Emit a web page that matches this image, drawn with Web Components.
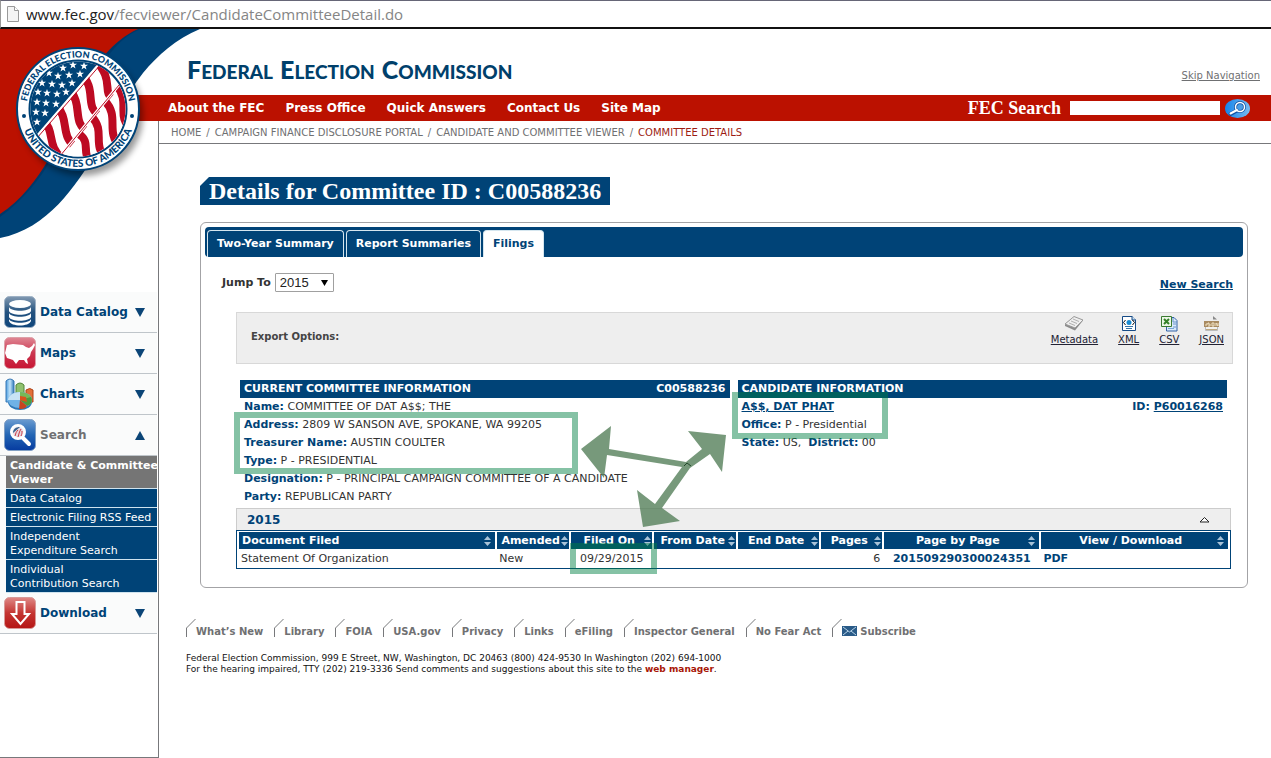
<!DOCTYPE html>
<html lang="en">
<head>
<meta charset="utf-8">
<meta name="viewport" content="width=device-width, initial-scale=1">
<title>Committee Details - Federal Election Commission</title>
<style>
    :root {
        --navy: #004377;
        --red: #bb1100;
        --gray: #6f7072;
        --line: #77787b;
        --serif: "Liberation Serif", Georgia, serif;
    }
    body {
        margin: 0;
        min-height: 100vh;
        display: flex;
        flex-direction: column;
        background: #fff;
        color: #333;
        font: 11px/18px "DejaVu Sans", Verdana, sans-serif;
    }
</style>
</head>
<body>

<address-bar host="www.fec.gov" path="/fecviewer/CandidateCommitteeDetail.do"></address-bar>

<site-header>
    <nav-link>About the FEC</nav-link>
    <nav-link>Press Office</nav-link>
    <nav-link>Quick Answers</nav-link>
    <nav-link>Contact Us</nav-link>
    <nav-link>Site Map</nav-link>
</site-header>

<page-body>
    <side-menu slot="side">
        <menu-entry label="Data Catalog" icon="database"></menu-entry>
        <menu-entry label="Maps" icon="map"></menu-entry>
        <menu-entry label="Charts" icon="chart"></menu-entry>
        <menu-entry label="Search" icon="search" open>
            <sub-entry current>Candidate &amp; Committee Viewer</sub-entry>
            <sub-entry>Data Catalog</sub-entry>
            <sub-entry>Electronic Filing RSS Feed</sub-entry>
            <sub-entry>Independent<br>Expenditure Search</sub-entry>
            <sub-entry>Individual<br>Contribution Search</sub-entry>
        </menu-entry>
        <menu-entry label="Download" icon="download"></menu-entry>
    </side-menu>

    <bread-crumbs></bread-crumbs>

    <committee-panel heading="Details for Committee ID : C00588236">
        <tab-strip slot="tabs"></tab-strip>
        <export-bar></export-bar>
        <committee-info></committee-info>
        <filings-table></filings-table>
        <callout-layer></callout-layer>
    </committee-panel>

    <site-footer></site-footer>
</page-body>

<template id="address-bar">
    <style>
        :host {
            display: flex;
            align-items: center;
            gap: 7px;
            height: 26px;
            padding-left: 6px;
            border-top: 1px solid #667;
            border-bottom: 2px solid #111;
            border-left: 1px solid #999;
            font: 15px/26px "Open Sans", sans-serif;
            color: #858585;
        }
        b { font-weight: 400; color: #222; }
        svg { flex: none; }
    </style>
    <svg width="12" height="16" viewBox="0 0 12 16"><path d="M.5 .5h7l4 4v11H.5z" fill="#f4f4f4" stroke="#999"/><path d="M7.500 .5v4h4" fill="#fff" stroke="#999"/></svg>
    <span><b></b><span class="path"></span></span>
</template>

<template id="site-header">
    <style>
        :host { display: block; position: relative; z-index: 1; }
        .top {
            display: flex;
            align-items: flex-end;
            justify-content: space-between;
            height: 66px;
            box-sizing: border-box;
            padding: 0 11px 12px 187px;
        }
        h1 {
            margin: 0;
            display: flex;
            gap: 7px;
            font: 900 19px/22px Lato, sans-serif;
            text-transform: uppercase;
            color: #00406b;
        }
        h1 span { display: block; }
        h1 span::first-letter { font-size: 25px; }
        .skip { font-size: 10px; line-height: 15px; color: var(--gray); }
        .bar {
            display: flex;
            align-items: center;
            gap: 21px;
            height: 26px;
            padding: 0 21px 0 168px;
            background: var(--red);
        }
        form { display: flex; align-items: center; gap: 5px; margin-left: auto; }
        label { font: bold 18px/26px var(--serif); color: #fff; margin-right: 4px; }
        input {
            width: 150px;
            height: 14px;
            box-sizing: border-box;
            padding: 0 2px;
            border: 0;
            background: #fff;
        }
        button { display: flex; padding: 0; border: 0; background: none; }
        .seal { position: absolute; left: 0; top: 0; }
        .ring { font: 900 9px Lato, sans-serif; fill: var(--navy); }
        .ring.low { font-size: 10px; }
    </style>
    <div class="top">
        <h1><span>Federal</span> <span>Election</span> <span>Commission</span></h1>
        <a class="skip" href="#main">Skip Navigation</a>
    </div>
    <div class="bar">
        <slot></slot>
        <form>
            <label for="q">FEC Search</label>
            <input id="q" type="text">
            <button type="button" aria-label="Search">
                <svg width="25" height="19" viewBox="0 0 25 19"><defs><linearGradient id="bt"><stop offset="0" stop-color="#1483ea"/><stop offset="1" stop-color="#79bbef"/></linearGradient></defs><ellipse cx="12.500" cy="9.500" rx="12.500" ry="9.500" fill="url(#bt)"/><path d="M12 11.500L5.500 15" stroke="#1250a0" stroke-width="4" stroke-linecap="round"/><circle cx="15" cy="8" r="4.500" fill="#4a9ee6" stroke="#1250a0" stroke-width="3"/><path d="M12 11L5.500 14.500" stroke="#fff" stroke-width="2" stroke-linecap="round"/><circle cx="15" cy="8" r="4.500" fill="none" stroke="#fff" stroke-width="1.500"/></svg>
            </button>
        </form>
    </div>
    <svg class="seal" width="204" height="214" viewBox="0 0 204 214">
        <defs>
            <clipPath id="disc"><circle cx="78" cy="80" r="47.500"/></clipPath>
            <filter id="shade" x="-20%" y="-20%" width="150%" height="150%"><feGaussianBlur stdDeviation="3"/></filter>
            <path id="upper" d="M26.500 80a51.500 51.500 0 0 1 103 0"/>
            <path id="lower" d="M20 80a58 58 0 0 0 116 0"/>
            <path id="star" d="M0-4L1-1.200H4L1.600.6 2.500 3.500 0 1.700-2.500 3.500-1.600.6-4-1.200H-1z" fill="#fff"/>
        </defs>
        <path d="M0 0H200C176 10 158 26 143 44C125 66 112 98 96 124C76 156 48 200 0 209z" fill="#004377"/>
        <path d="M141 0C118 8 100 36 84 66C64 104 48 154 0 188V178C44 146 62 96 82 58C96 30 112 8 133 0z" fill="#003260" opacity=".6"/>
        <path d="M0 0H138C112 12 96 34 80 66C62 104 42 158 0 185z" fill="#bb1100"/>
        <circle cx="82" cy="86" r="61" fill="#000" opacity=".4" filter="url(#shade)"/>
        <circle cx="78" cy="80" r="61" fill="#fff" stroke="#004377" stroke-width="2"/>
        <circle cx="78" cy="80" r="48.500" fill="#fff" stroke="#004377" stroke-width="2"/>
        <g clip-path="url(#disc)">
            <g fill="none" stroke="#bd0a22" stroke-width="8">
                <path d="M42 90C56 102 46 116 62 129"/>
                <path d="M55 74C71 92 59 104 75 118"/>
                <path d="M68 58C85 78 70 92 89 104"/>
                <path d="M80 43C99 62 82 78 102 88"/>
                <path d="M93 28C117 54 100 60 114 72"/>
            </g>
            <path d="M128 48L62 128V134H132z" fill="#fff"/>
            <g fill="none" stroke="#bd0a22" stroke-width="8">
                <path d="M117 57C131 74 115 87 132 101"/>
                <path d="M105 72C120 88 105 102 120 118"/>
                <path d="M92 88C106 103 91 116 107 130"/>
                <path d="M79 105C92 114 80 124 92 134"/>
            </g>
            <path d="M128 45L60 127" stroke="#fff" stroke-width="3"/>
            <path d="M124 50L60 127" stroke="#bd0a22"/>
            <path d="M20 20H108L97 36L36 107L20 120z" fill="#004377"/>
            <path d="M99 35L36 108" stroke="#fff" stroke-width="2"/>
            <path d="M101 35L37 109" stroke="#bd0a22"/>
            <g>
                <use href="#star" x="63" y="39"/><use href="#star" x="73" y="36"/><use href="#star" x="84" y="37"/>
                <use href="#star" x="49" y="44"/><use href="#star" x="58" y="47"/><use href="#star" x="69" y="46"/><use href="#star" x="80" y="45"/>
                <use href="#star" x="42" y="54"/><use href="#star" x="52" y="55"/><use href="#star" x="62" y="56"/><use href="#star" x="72" y="54"/>
                <use href="#star" x="38" y="63"/><use href="#star" x="47" y="64"/><use href="#star" x="57" y="65"/><use href="#star" x="66" y="63"/>
                <use href="#star" x="37" y="73"/><use href="#star" x="46" y="74"/><use href="#star" x="56" y="75"/>
                <use href="#star" x="36" y="83"/><use href="#star" x="45" y="84"/><use href="#star" x="37" y="93"/>
            </g>
        </g>
        <circle cx="24" cy="87" r="2" fill="#004377"/>
        <circle cx="132" cy="87" r="2" fill="#004377"/>
        <text class="ring" text-anchor="middle"><textPath href="#upper" startOffset="50%">FEDERAL ELECTION COMMISSION</textPath></text>
        <text class="ring low" text-anchor="middle"><textPath href="#lower" startOffset="50%">UNITED STATES OF AMERICA</textPath></text>
    </svg>
</template>

<template id="nav-link">
    <style>
        :host { display: block; }
        a { font-size: 12px; font-weight: bold; color: #fff; text-decoration: none; white-space: nowrap; }
    </style>
    <a href="#"><slot></slot></a>
</template>

<template id="page-body">
    <style>
        :host { flex: 1; display: grid; grid-template-columns: 159px minmax(0, 1fr); }
        aside {
            box-sizing: border-box;
            padding-top: 171px;
            border-right: 1px solid var(--line);
            border-bottom: 1px solid var(--line);
        }
    </style>
    <aside><slot name="side"></slot></aside>
    <main id="main"><slot></slot></main>
</template>

<template id="side-menu">
    <style>
        :host { display: block; margin-right: 1px; background: #fafbfb; }
    </style>
    <slot></slot>
</template>

<template id="menu-entry">
    <style>
        :host { display: block; }
        button {
            display: flex;
            align-items: center;
            gap: 4px;
            width: 100%;
            height: 41px;
            box-sizing: border-box;
            padding: 0 12px 0 4px;
            border: 0;
            border-bottom: 1px solid #bfc5ca;
            background: none;
            color: var(--navy);
            font: bold 12px/18px "DejaVu Sans", Verdana, sans-serif;
            text-align: left;
        }
        :host([open]) button { color: var(--gray); }
        .name { flex: 1; }
        .mark { color: #0b4577; }
        :host([open]) .mark { transform: scaleY(-1); }
        .sub { padding-left: 6px; }
    </style>
    <button type="button">
        <svg class="pic" width="32" height="32" viewBox="0 0 32 32"></svg>
        <span class="name"></span>
        <svg class="mark" width="10" height="9" viewBox="0 0 10 9"><path d="M0 0H10L5 9z" fill="currentColor"/></svg>
    </button>
    <div class="sub"><slot></slot></div>
</template>

<template id="sub-entry">
    <style>
        :host {
            display: block;
            padding: 3px 0 1px 4px;
            background: var(--navy);
            border-bottom: 1px solid #cfe3ee;
            line-height: 14px;
            overflow: hidden;
        }
        :host([current]) { background: #757575; font-weight: bold; }
        a { color: #fff; text-decoration: none; white-space: nowrap; }
        :host([current]) a { white-space: normal; display: block; margin-right: -4px; }
    </style>
    <a href="#"><slot></slot></a>
</template>

<template id="bread-crumbs">
    <style>
        :host {
            display: flex;
            flex-wrap: wrap;
            gap: 5px;
            padding: 2px 12px 1px;
            border-bottom: 1px solid var(--line);
            font-size: 10px;
            line-height: 19px;
            color: var(--gray);
            text-transform: uppercase;
        }
        a { color: inherit; text-decoration: none; }
        b { font-weight: 400; color: #9c1c12; }
    </style>
    <a href="#">Home</a><span>/</span>
    <a href="#">Campaign Finance Disclosure Portal</a><span>/</span>
    <a href="#">Candidate and Committee Viewer</a><span>/</span>
    <b>Committee Details</b>
</template>

<template id="committee-panel">
    <style>
        :host { display: block; padding: 33px 23px 0 41px; }
        h2 {
            width: fit-content;
            margin: 0 0 17px;
            padding: 0 9px;
            background: var(--navy);
            clip-path: polygon(9px 0, 100% 0, 100% 100%, 0 100%, 0 9px);
            color: #fff;
            font: bold 24px/28px var(--serif);
        }
        section {
            position: relative;
            padding: 4px 4px 18px;
            border: 1px solid #a3a3a6;
            border-radius: 6px;
        }
        .tools {
            display: flex;
            align-items: center;
            justify-content: space-between;
            padding: 14px 10px 18px 17px;
            font-weight: bold;
        }
        .jump { display: flex; align-items: center; gap: 4px; }
        .pick { position: relative; display: flex; }
        .pick svg { position: absolute; right: 6px; top: 7px; pointer-events: none; }
        select {
            appearance: none;
            width: 59px;
            height: 19px;
            padding: 0 4px;
            border: 1px solid #a0a0a0;
            border-radius: 1px;
            background: #fff;
            color: #222;
            font: 13px/17px "Liberation Sans", Arial, sans-serif;
        }
        .new { color: var(--navy); padding-top: 5px; }
        .inner { padding: 0 10px 0 31px; }
    </style>
    <h2></h2>
    <section>
        <slot name="tabs"></slot>
        <div class="tools">
            <div class="jump">
                <label for="year">Jump To</label>
                <span class="pick">
                    <select id="year"><option>2015</option></select>
                    <svg width="7" height="6" viewBox="0 0 7 6"><path d="M0 0H7L3.500 6z"/></svg>
                </span>
            </div>
            <a class="new" href="#">New Search</a>
        </div>
        <div class="inner"><slot></slot></div>
    </section>
</template>

<template id="tab-strip">
    <style>
        :host {
            display: flex;
            gap: 2px;
            padding: 3px 2px 0;
            border-radius: 4px;
            background: var(--navy);
        }
        button {
            height: 27px;
            padding: 0 9px;
            border: 1px solid #d5e6ef;
            border-bottom: 0;
            border-radius: 4px 4px 0 0;
            background: none;
            color: #fff;
            font: bold 11px/26px "DejaVu Sans", Verdana, sans-serif;
        }
        button[aria-selected="true"] { background: #fff; color: var(--navy); }
    </style>
    <button type="button" role="tab">Two-Year Summary</button>
    <button type="button" role="tab">Report Summaries</button>
    <button type="button" role="tab" aria-selected="true">Filings</button>
</template>

<template id="export-bar">
    <style>
        :host {
            display: flex;
            align-items: flex-start;
            justify-content: space-between;
            height: 52px;
            box-sizing: border-box;
            margin-bottom: 16px;
            padding: 2px 8px 0 14px;
            border: 1px solid #d8d8d8;
            background: #eee;
        }
        b { padding-top: 13px; color: #444; font-size: 10px; }
        div { display: flex; gap: 20px; }
        a {
            display: flex;
            flex-direction: column;
            align-items: center;
            gap: 1px;
            font-size: 10px;
            line-height: 13px;
            color: #223;
        }
    </style>
    <b>Export Options:</b>
    <div>
        <a href="#">
            <svg width="20" height="17" viewBox="0 0 20 17"><path d="M1 9L10 2L19 5.500L11 15.500L1 11z" fill="#8b8b8b"/><path d="M1 9L10 1.500L19 5L11 13z" fill="#efefef" stroke="#999"/><path d="M9 4l6 2.500M7 6l6 2.500M5 8l6 2.500" stroke="#b0b0b0"/></svg>
            Metadata
        </a>
        <a href="#">
            <svg width="16" height="17" viewBox="0 0 16 17"><path d="M1.500 1.500H11L14.500 5V15.500H1.500z" fill="#fff" stroke="#164b86"/><path d="M11 1L11 5H15" fill="#c6dced" stroke="#164b86"/><path d="M4.500 5L2.500 7.500L4.500 10M11.500 5L13.500 7.500L11.500 10" fill="none" stroke="#111"/><circle cx="8" cy="7.500" r="2.500" fill="#188ad0"/><path d="M4 11.500h8M5 13.500h6" stroke="#3774a6"/></svg>
            XML
        </a>
        <a href="#">
            <svg width="17" height="17" viewBox="0 0 17 17"><path d="M5.500 2.500H13L16 5.500V16H5.500z" fill="#d9e9fb" stroke="#3362a6"/><path d="M12 3v4h4M12 9h3M12 12h3" fill="none" stroke="#6d96cd"/><path d="M.5 1.500H10.500V11.500H.5z" fill="#edf7e8" stroke="#3a7b32"/><path d="M3 4L8 9M8 4L3 9" stroke="#348228" stroke-width="2"/><path d="M7 13.500h6" stroke="#79a6d8"/></svg>
            CSV
        </a>
        <a href="#">
            <svg width="17" height="17" viewBox="0 0 17 17"><path d="M2.500 6V15.500H14.500V6" fill="#f2f2f0" stroke="#bbb"/><path d="M10 1L14 4.500H10z" fill="#888"/><path d="M1 6h15v6H1z" fill="#a98b61"/><path d="M2 10h2V8m2 0H5v1h2v2H5m4-3h2v3H9zm4 3V8l2 3V8" fill="none" stroke="#f0e2c4"/><path d="M3 14.500h11" stroke="#bfa981"/></svg>
            JSON
        </a>
    </div>
</template>

<template id="committee-info">
    <style>
        :host {
            display: grid;
            grid-template-columns: 1fr 1fr;
            gap: 8px;
            padding: 0 6px 2px 4px;
        }
        h3 {
            display: flex;
            justify-content: space-between;
            margin: 0;
            padding: 0 4px;
            background: var(--navy);
            color: #fff;
            font-size: 11px;
            line-height: 18px;
        }
        p { margin: 0; padding: 0 4px; white-space: nowrap; }
        p.two { display: flex; justify-content: space-between; }
        b, a { color: var(--navy); font-weight: bold; }
    </style>
    <div>
        <h3><span>CURRENT COMMITTEE INFORMATION</span><span>C00588236</span></h3>
        <p><b>Name:</b> COMMITTEE OF DAT A$$; THE</p>
        <p><b>Address:</b> 2809 W SANSON AVE, SPOKANE, WA 99205</p>
        <p><b>Treasurer Name:</b> AUSTIN COULTER</p>
        <p><b>Type:</b> P - PRESIDENTIAL</p>
        <p><b>Designation:</b> P - PRINCIPAL CAMPAIGN COMMITTEE OF A CANDIDATE</p>
        <p><b>Party:</b> REPUBLICAN PARTY</p>
    </div>
    <div>
        <h3>CANDIDATE INFORMATION</h3>
        <p class="two"><a href="#">A$$, DAT PHAT</a><b>ID: <a href="#">P60016268</a></b></p>
        <p><b>Office:</b> P - Presidential</p>
        <p><b>State:</b> US,&nbsp; <b>District:</b> 00</p>
    </div>
</template>

<template id="filings-table">
    <style>
        :host { display: block; margin-right: 2px; }
        .year {
            display: flex;
            align-items: center;
            justify-content: space-between;
            height: 22px;
            box-sizing: border-box;
            padding: 0 20px 0 10px;
            border: 1px solid #ccc;
            border-bottom: 0;
            background: #eee;
            color: var(--navy);
            font-size: 12px;
            font-weight: bold;
        }
        table {
            width: 100%;
            table-layout: fixed;
            border: 1px solid var(--navy);
            border-spacing: 2px 1px;
            line-height: 17px;
        }
        th, td { padding: 0 2px; text-align: left; white-space: nowrap; }
        th { padding: 0 1px 0 3px; background: var(--navy); color: #fff; }
        th div { display: flex; align-items: center; }
        th span { flex: 1; text-align: center; }
        th.start span { text-align: left; }
        th.wide { padding-right: 4px; }
        td.mid { text-align: center; }
        td.num { text-align: right; }
        td a { color: var(--navy); font-weight: bold; text-decoration: none; }
    </style>
    <div class="year">2015 <svg width="11" height="7" viewBox="0 0 11 7"><path d="M1 6L5.500 1.500L10 6z" fill="#fff" stroke="#222"/></svg></div>
    <table>
        <colgroup></colgroup>
        <thead><tr></tr></thead>
        <tbody>
            <tr>
                <td>Statement Of Organization</td>
                <td>New</td>
                <td class="mid">09/29/2015</td>
                <td></td>
                <td></td>
                <td class="num">6</td>
                <td class="mid"><a href="#">201509290300024351</a></td>
                <td><a href="#">PDF</a></td>
            </tr>
        </tbody>
    </table>
</template>

<!-- Highlighter frames and the three-way arrow drawn over the panel -->
<template id="callout-layer">
    <style>
        :host { position: absolute; left: -1px; top: -1px; pointer-events: none; }
        svg { display: block; }
        rect { fill: none; stroke: rgba(0, 127, 66, .48); stroke-width: 6; }
        .arrow { fill: #557f5a; opacity: .8; }
    </style>
    <svg width="700" height="366" viewBox="200 222 700 366">
        <rect x="237" y="415" width="338" height="56"/>
        <rect x="735" y="395" width="150" height="41"/>
        <rect x="573" y="546" width="81" height="25"/>
        <path class="arrow" d="M581 449L611 426L609 449L686 462L702 449L688 431L726 435L722 472L710 454L690 468L662 508L680 521L643 527L637 490L655 504L682 467L607 455L604 478z"/>
        <path d="M684 466l3-3 4 3" fill="none" stroke="#25482c"/>
    </svg>
</template>

<template id="site-footer">
    <style>
        :host { display: block; padding: 30px 27px 0; color: #111; font-size: 9px; line-height: 11px; }
        nav { display: flex; flex-wrap: wrap; gap: 11px; margin-bottom: 15px; }
        a.item {
            display: flex;
            align-items: flex-end;
            color: var(--gray);
            font-size: 10px;
            font-weight: bold;
            line-height: 12px;
            text-decoration: none;
        }
        .mail { margin: 0 3px 2px 0; }
        p { margin: 0; }
        p a { color: #a81606; font-weight: bold; text-decoration: none; }
    </style>
    <nav></nav>
    <p>Federal Election Commission, 999 E Street, NW, Washington, DC 20463 (800) 424-9530 In Washington (202) 694-1000</p>
    <p>For the hearing impaired, TTY (202) 219-3336 Send comments and suggestions about this site to the <a href="#">web manager</a>.</p>
</template>

<script>
const ICONS = {
    database: `
        <defs><linearGradient id="g" x2="0" y2="1"><stop offset="0" stop-color="#8199b1"/><stop offset=".5" stop-color="#23527f"/><stop offset="1" stop-color="#0e457b"/></linearGradient></defs>
        <rect x=".5" y=".5" width="31" height="31" rx="5" fill="url(#g)" stroke="#9cb0c4"/>
        <g fill="#fff"><ellipse cx="16" cy="8" rx="11" ry="4"/>
        <path d="M5 11c2 5 20 5 22 0v4c-2 5-20 5-22 0zM5 17c2 5 20 5 22 0v4c-2 5-20 5-22 0zM5 23c2 5 20 5 22 0v2c-2 6-20 6-22 0z"/></g>`,
    map: `
        <defs><linearGradient id="g" x2="0" y2="1"><stop offset="0" stop-color="#df8794"/><stop offset=".5" stop-color="#cb3750"/><stop offset="1" stop-color="#c81533"/></linearGradient></defs>
        <rect x=".5" y=".5" width="31" height="31" rx="5" fill="url(#g)" stroke="#dda0a8"/>
        <path d="M3 8l6-1 10 1 3 2 3 1 3-2 2-3 1 2-2 4-2 3-1 4-3 3 1 5-2-1-2-3-5 0-3 4-3-4-3-1-3-1-2-5z" fill="#fff"/>`,
    chart: `
        <defs><linearGradient id="g"><stop offset="0" stop-color="#4d9ee0"/><stop offset=".5" stop-color="#c2e3f8"/><stop offset="1" stop-color="#3179ba"/></linearGradient></defs>
        <path d="M2 3q4-4 8 0V24H2z" fill="url(#g)" stroke="#3979b5"/>
        <path d="M12 7q4-4 8 0V20H12z" fill="#8fc16e" stroke="#518638"/>
        <path d="M22 12q4-3 7 0V24H22z" fill="#e26f37" stroke="#ae4319"/>
        <ellipse cx="16" cy="24" rx="12" ry="8" fill="#2d78b8"/>
        <ellipse cx="16" cy="22" rx="12" ry="8" fill="#6fb2e6"/>
        <path d="M16 22V14c-7 0-12 4-12 8z" fill="#c8e3f5"/>
        <path d="M16 22V14c7 0 12 4 12 8l-3 5z" fill="#77b957"/>
        <path d="M16 22l11-3c2 4 0 8-4 9z" fill="#4f9a3c"/>
        <path d="M16 22l7 6c-2 3-5 3-8 3z" fill="#c8431f"/>
        <path d="M16 22V18l6 1 1 5z" fill="#d9541e"/>`,
    search: `
        <defs><linearGradient id="g" x2="0" y2="1"><stop offset="0" stop-color="#6a9bd0"/><stop offset=".5" stop-color="#2265b4"/><stop offset="1" stop-color="#063ba0"/></linearGradient></defs>
        <rect x=".5" y=".5" width="31" height="31" rx="5" fill="url(#g)" stroke="#809fc4"/>
        <path d="M19 19l6 6" stroke="#fff" stroke-width="4" stroke-linecap="round"/>
        <circle cx="14" cy="13" r="7" fill="#f4f7fa" stroke="#fff" stroke-width="2"/>
        <circle cx="14" cy="13" r="5" fill="#e9d8de"/>
        <path d="M9 14c0-4 3-6 7-6z" fill="#34618f"/>
        <path d="M11 17c1-3 1-4 3-6M14 18c1-3 1-5 3-8M17 17c1-2 1-3 1-5" stroke="#c73843" fill="none"/>`,
    download: `
        <defs><linearGradient id="g" x2="0" y2="1"><stop offset="0" stop-color="#df8885"/><stop offset=".5" stop-color="#c43532"/><stop offset="1" stop-color="#b51514"/></linearGradient></defs>
        <rect x=".5" y=".5" width="31" height="31" rx="5" fill="url(#g)" stroke="#d89a98"/>
        <path d="M12.500 5v12H8l8.500 10L25 17h-4.500V5z" fill="none" stroke="#fff" stroke-width="2"/>`
};

// Every element clones the template that carries its own tag name
class TemplateElement extends HTMLElement {
    constructor() {
        super();
        this.attachShadow({ mode: 'open' });
        const template = document.getElementById(this.localName);
        this.shadowRoot.appendChild(template.content.cloneNode(true));
    }

    find(selector) {
        return this.shadowRoot.querySelector(selector);
    }
}

class AddressBar extends TemplateElement {
    connectedCallback() {
        this.find('b').textContent = this.getAttribute('host');
        this.find('.path').textContent = this.getAttribute('path');
    }
}

class MenuEntry extends TemplateElement {
    connectedCallback() {
        this.find('.name').textContent = this.getAttribute('label');
        this.find('.pic').innerHTML = ICONS[this.getAttribute('icon')];
        this.find('button').setAttribute('aria-expanded', this.hasAttribute('open'));
    }
}

class CommitteePanel extends TemplateElement {
    connectedCallback() {
        this.find('h2').textContent = this.getAttribute('heading');
    }
}

class FilingsTable extends TemplateElement {
    connectedCallback() {
        const columns = [
            ['Document Filed', 261, 'start wide'],
            ['Amended', 73, ''],
            ['Filed On', 83, ''],
            ['From Date', 83, ''],
            ['End Date', 83, ''],
            ['Pages', 62, ''],
            ['Page by Page', 158, 'wide'],
            ['View / Download', 190, 'wide']
        ];
        const total = columns.reduce((sum, column) => sum + column[1], 0);
        const sort = '<svg width="7" height="10" viewBox="0 0 7 10"><path d="M0 4L3.500 0L7 4zM0 6H7L3.500 10z" fill="#a9c3d8"/></svg>';

        this.find('colgroup').innerHTML = columns
            .map(([, width]) => `<col style="width: ${width / total * 100}%">`).join('');
        this.find('thead tr').innerHTML = columns
            .map(([name, , kind]) => `<th class="${kind}"><div><span>${name}</span>${sort}</div></th>`).join('');
    }
}

class SiteFooter extends TemplateElement {
    connectedCallback() {
        const items = ['What’s New', 'Library', 'FOIA', 'USA.gov', 'Privacy', 'Links', 'eFiling',
            'Inspector General', 'No Fear Act', 'Subscribe'];
        const corner = '<svg width="10" height="20" viewBox="0 0 10 20"><path d="M.5 19V10L9.500 1" fill="none" stroke="#77787b"/></svg>';
        const mail = '<svg class="mail" width="15" height="10" viewBox="0 0 15 10"><path d="M0 0H15V10H0z" fill="#2a5b88"/><path d="M1 1l6.500 5L14 1M1 9l5-4M14 9l-5-4" fill="none" stroke="#b7d3e8"/></svg>';

        this.find('nav').innerHTML = items
            .map(name => `<a class="item" href="#">${corner}${name === 'Subscribe' ? mail : ''}${name}</a>`).join('');
    }
}

customElements.define('address-bar', AddressBar);
customElements.define('site-header', class extends TemplateElement {});
customElements.define('nav-link', class extends TemplateElement {});
customElements.define('page-body', class extends TemplateElement {});
customElements.define('side-menu', class extends TemplateElement {});
customElements.define('menu-entry', MenuEntry);
customElements.define('sub-entry', class extends TemplateElement {});
customElements.define('bread-crumbs', class extends TemplateElement {});
customElements.define('committee-panel', CommitteePanel);
customElements.define('tab-strip', class extends TemplateElement {});
customElements.define('export-bar', class extends TemplateElement {});
customElements.define('committee-info', class extends TemplateElement {});
customElements.define('filings-table', FilingsTable);
customElements.define('callout-layer', class extends TemplateElement {});
customElements.define('site-footer', SiteFooter);
</script>
</body>
</html>
